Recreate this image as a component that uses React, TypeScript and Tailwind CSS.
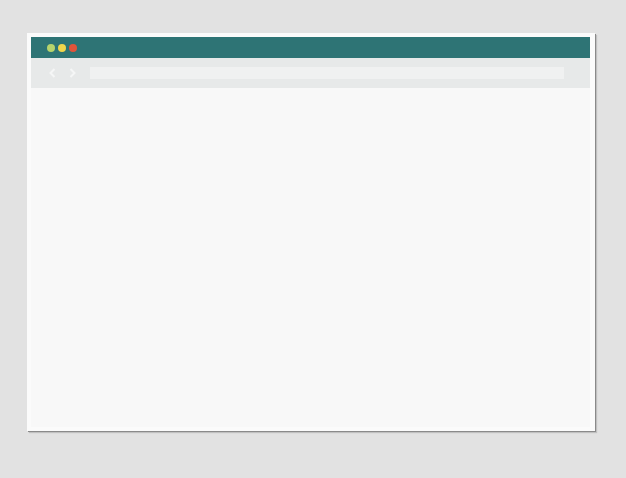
import React from 'react';

export default function App() {
  return (
    <div className="w-[626px] h-[478px] bg-[#e2e2e2] pt-[33px] pl-[27px]">
      {/* Browser window card */}
      <div className="w-[568px] h-[398px] bg-[#fbfbfb] pt-1 pl-1 pr-[5px] pb-1 shadow-[1px_1px_0_#8a8a8a,2px_2px_1px_rgba(0,0,0,0.15)] flex flex-col">
        {/* Title bar */}
        <div className="h-[21px] bg-[#2e7475] flex items-center gap-[3px] pl-[16px]">
          <span className="w-2 h-2 rounded-full bg-[#b7d46c]" />
          <span className="w-2 h-2 rounded-full bg-[#f1d64c]" />
          <span className="w-2 h-2 rounded-full bg-[#e1543a]" />
        </div>
        {/* Toolbar */}
        <div className="h-[30px] bg-[#e7e9e9] flex items-center pl-[18px] pr-[26px]">
          <div className="flex items-center gap-[13px]">
            <svg width="7" height="10" viewBox="0 0 7 10">
              <path d="M5.5 1L1.5 5l4 4" fill="none" stroke="#f5f6f6" strokeWidth="2" />
            </svg>
            <svg width="7" height="10" viewBox="0 0 7 10">
              <path d="M1.5 1l4 4-4 4" fill="none" stroke="#f5f6f6" strokeWidth="2" />
            </svg>
          </div>
          <div className="ml-[14px] flex-1 h-[12px] bg-[#f0f1f1]" />
        </div>
        {/* Page content */}
        <div className="flex-1 bg-[#f8f8f8]" />
      </div>
    </div>
  );
}
